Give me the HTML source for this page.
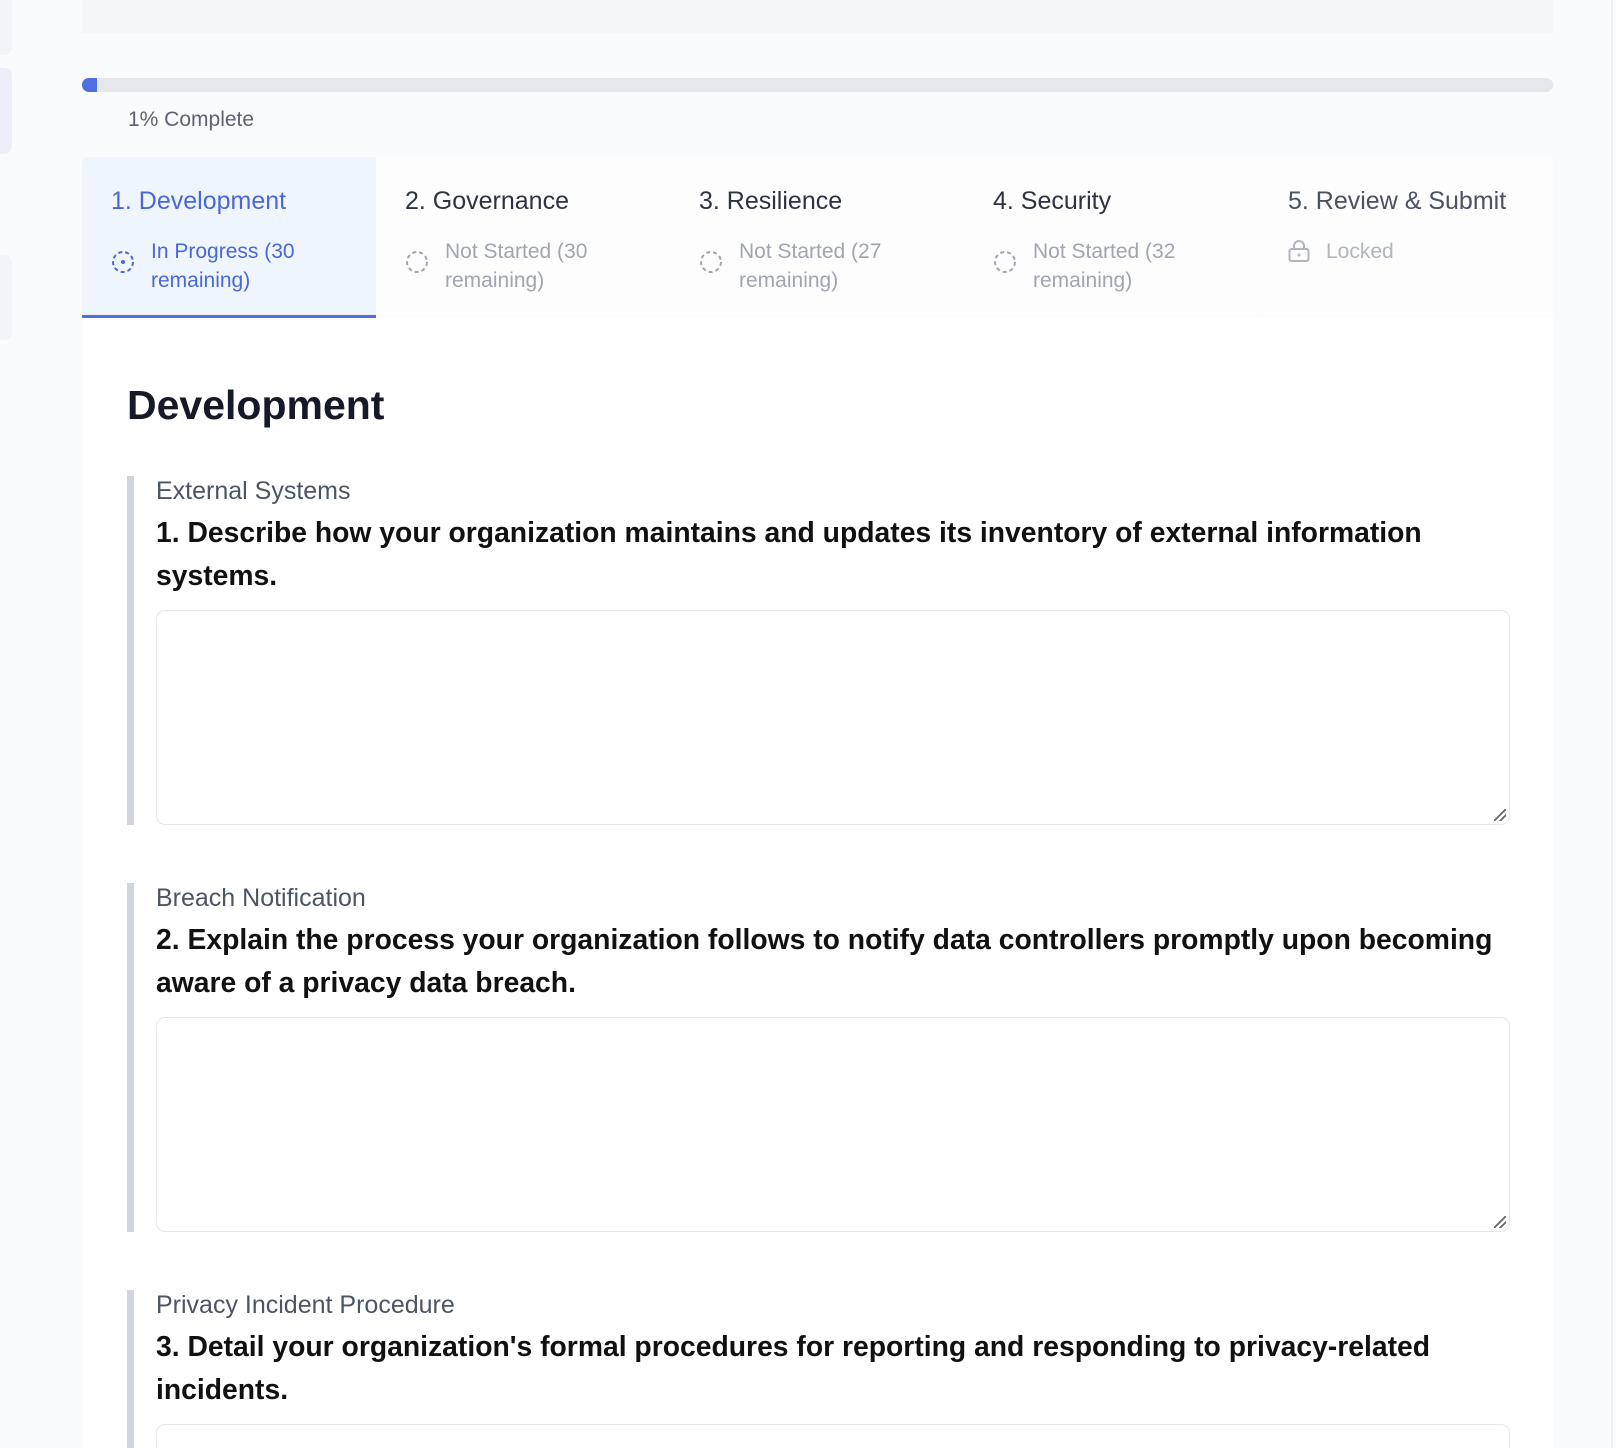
<!DOCTYPE html>
<html style="width:1616px;height:1448px;overflow:hidden"><head><meta charset="utf-8"><style>
*{margin:0;padding:0;box-sizing:border-box}
body{width:1616px;height:1448px;overflow:hidden;background:#fafbfc;font-family:"Liberation Sans",Arial,sans-serif;position:relative}
.a{position:absolute}
.tab{position:absolute;top:157px;width:294px;height:161px;background:#fdfdfe;padding:29px 0 0 29px}
.tab h3{font-size:25px;font-weight:normal;color:#2d3340;line-height:30px}
.st{display:flex;margin-top:21px;color:#a0a5b0;font-size:21px;line-height:29px}
.st svg{flex:none;margin:13px 16px 0 0}
.q{position:absolute;left:127px;width:1383px;border-left:7px solid #d1d5db;padding-left:22px}
.cat{font-size:25px;color:#4b5563;line-height:30px}
.qt{font-size:28.3px;font-weight:bold;color:#111;line-height:43px;margin-top:5px}
.ta{margin-top:13px;height:215px;border:1.5px solid #e5e7eb;border-radius:9px;background:#fff;position:relative}
.ta:after{content:"";position:absolute;right:3px;bottom:3px;width:12px;height:12px;background:linear-gradient(135deg,transparent 45%,#666 45%,#666 55%,transparent 55%,transparent 70%,#666 70%,#666 80%,transparent 80%)}
</style></head><body>
<div class="a" style="left:0;top:0;width:12px;height:55px;background:#f3f4f8;border-radius:0 0 8px 0"></div>
<div class="a" style="left:0;top:68px;width:12px;height:86px;background:#eceff9;border-radius:0 8px 8px 0"></div>
<div class="a" style="left:0;top:255px;width:12px;height:85px;background:#f3f4f8;border-radius:0 8px 8px 0"></div>
<div class="a" style="left:82px;top:0;width:1471px;height:33px;background:#f6f7f9"></div>
<div class="a" style="left:1611px;top:0;width:2px;height:1448px;background:#eceef1"></div>
<div class="a" style="left:82px;top:78px;width:1471px;height:14px;background:#e5e7eb;border-radius:7px;overflow:hidden"><div style="width:15px;height:14px;background:#4f6fe0"></div></div>
<div class="a" style="left:128px;top:108px;font-size:21px;color:#5b6270">1% Complete</div>
<div class="tab" style="left:82px;background:#eff5fd;border-bottom:3px solid #4f6ee0;border-radius:6px 0 0 0"><h3 style="color:#4a67d8">1. Development</h3>
<div class="st" style="color:#4a67d8"><svg width="24" height="24" viewBox="0 0 24 24"><circle cx="12" cy="12" r="10" fill="none" stroke="#4a67d8" stroke-width="2" stroke-dasharray="4 3"/><circle cx="12" cy="12" r="2" fill="#4a67d8"/></svg><span>In Progress (30<br>remaining)</span></div></div>
<div class="tab" style="left:376px"><h3>2. Governance</h3><div class="st"><svg width="24" height="24" viewBox="0 0 24 24"><circle cx="12" cy="12" r="10" fill="none" stroke="#a0a5b0" stroke-width="2" stroke-dasharray="4 3"/></svg><span>Not Started (30<br>remaining)</span></div></div>
<div class="tab" style="left:670px"><h3>3. Resilience</h3><div class="st"><svg width="24" height="24" viewBox="0 0 24 24"><circle cx="12" cy="12" r="10" fill="none" stroke="#a0a5b0" stroke-width="2" stroke-dasharray="4 3"/></svg><span>Not Started (27<br>remaining)</span></div></div>
<div class="tab" style="left:964px"><h3>4. Security</h3><div class="st"><svg width="24" height="24" viewBox="0 0 24 24"><circle cx="12" cy="12" r="10" fill="none" stroke="#a0a5b0" stroke-width="2" stroke-dasharray="4 3"/></svg><span>Not Started (32<br>remaining)</span></div></div>
<div class="tab" style="left:1259px"><h3 style="color:#4b5260">5. Review &amp; Submit</h3><div class="st" style="color:#b0b5be"><svg width="22" height="24" viewBox="0 0 22 24" style="margin-top:2px"><rect x="1.5" y="10" width="19" height="12" rx="2" fill="none" stroke="#b0b5be" stroke-width="2"/><path d="M6 10V7a5 5 0 0 1 10 0v3" fill="none" stroke="#b0b5be" stroke-width="2"/><circle cx="11" cy="16" r="1.5" fill="#b0b5be"/></svg><span>Locked</span></div></div>
<div class="a" style="left:82px;top:318px;width:1471px;height:1130px;background:#fff"></div>
<div class="a" style="left:127px;top:382px;font-size:41px;font-weight:bold;color:#151a26">Development</div>
<div class="q" style="top:476px"><div class="cat">External Systems</div><div class="qt">1. Describe how your organization maintains and updates its inventory of external information systems.</div><div class="ta"></div></div>
<div class="q" style="top:883px"><div class="cat">Breach Notification</div><div class="qt">2. Explain the process your organization follows to notify data controllers promptly upon becoming aware of a privacy data breach.</div><div class="ta"></div></div>
<div class="q" style="top:1290px"><div class="cat">Privacy Incident Procedure</div><div class="qt">3. Detail your organization's formal procedures for reporting and responding to privacy-related incidents.</div><div class="ta"></div></div>
</body></html>
